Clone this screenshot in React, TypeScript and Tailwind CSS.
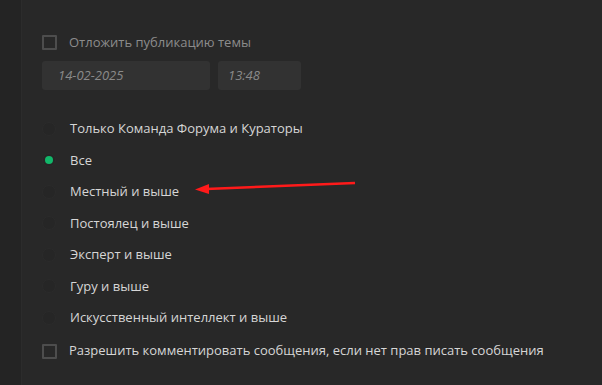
import React from "react";

const radios = [
  "Только Команда Форума и Кураторы",
  "Все",
  "Местный и выше",
  "Постоялец и выше",
  "Эксперт и выше",
  "Гуру и выше",
  "Искусственный интеллект и выше",
];

export default function App() {
  return (
    <div
      className="flex h-[385px] w-[602px] bg-[#282828] text-[13px]"
      style={{ fontFamily: '"Open Sans", "Noto Sans", sans-serif' }}
    >
      <div className="w-[22px] shrink-0 border-r border-[#2c2c2c] bg-[#242424]" />
      <div className="relative flex-1 pl-[20px] pt-[34px]">
        <label className="flex items-center gap-[12px] h-[17px]">
          <span className="h-[15px] w-[15px] border-[2px] border-[#4d4d4d] rounded-[1px]" />
          <span className="text-[#8c8c8c]">Отложить публикацию темы</span>
        </label>
        <div className="mt-[10px] flex gap-[8px]">
          <div className="flex h-[29px] w-[168px] items-center rounded-[3px] bg-[#323232] pl-[16px] italic text-[#8a8a8a]">
            14-02-2025
          </div>
          <div className="flex h-[29px] w-[83px] items-center rounded-[3px] bg-[#323232] pl-[10px] italic text-[#8a8a8a]">
            13:48
          </div>
        </div>
        <div className="mt-[23px] flex flex-col">
          {radios.map((r, i) => (
            <div key={r} className="flex h-[31.5px] items-center gap-[14px]">
              <span className="flex h-[14px] w-[14px] items-center justify-center rounded-full border border-[#2b2b2b] bg-[#262626]">
                {i === 1 && <span className="h-[8px] w-[8px] rounded-full bg-[#12b76a]" />}
              </span>
              <span className="text-[#d6d6d6]">{r}</span>
            </div>
          ))}
        </div>
        <label className="mt-[9px] flex items-center gap-[12px] h-[17px]">
          <span className="h-[15px] w-[15px] border-[2px] border-[#4d4d4d] rounded-[1px]" />
          <span className="text-[#d6d6d6]">
            Разрешить комментировать сообщения, если нет прав писать сообщения
          </span>
        </label>
        <svg
          className="absolute left-[170px] top-[176px]"
          width="170"
          height="20"
          viewBox="0 0 170 20"
        >
          <line x1="163" y1="7" x2="14" y2="13" stroke="#ff1a1a" strokeWidth="2.5" />
          <polygon points="3,13.5 17,8 17,18" fill="#ff1a1a" />
        </svg>
      </div>
    </div>
  );
}
